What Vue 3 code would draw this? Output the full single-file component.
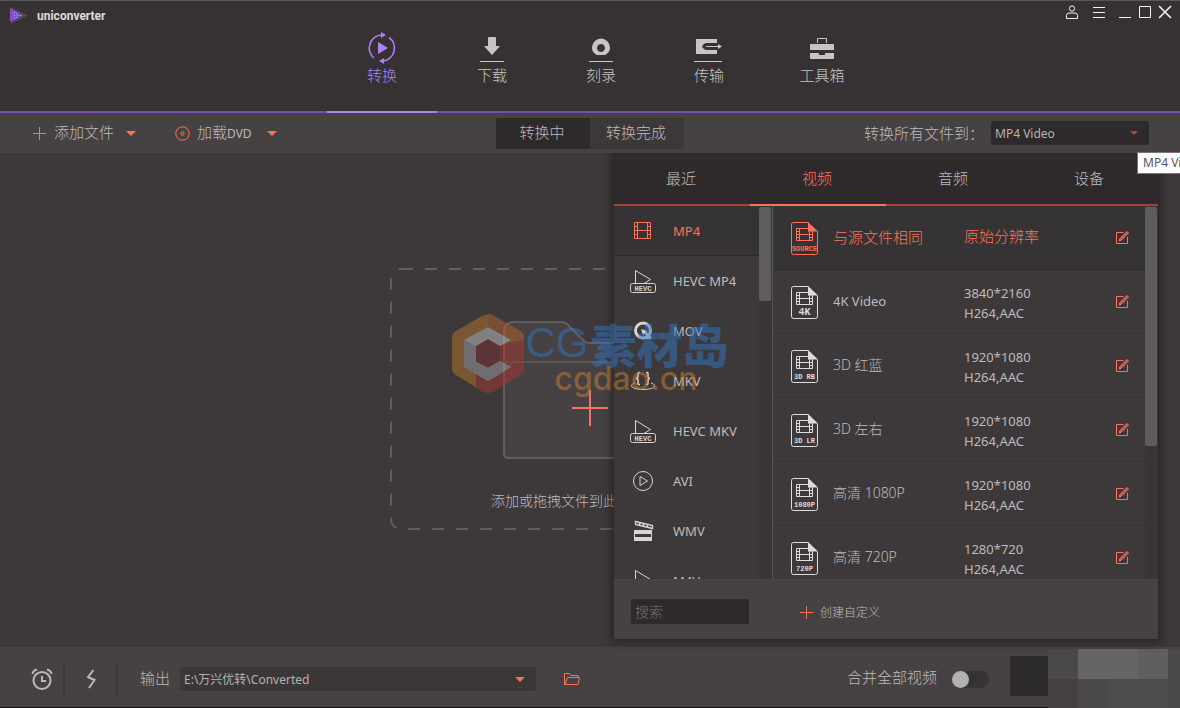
<script setup>
import { ref } from 'vue'

const navTabs = [
  { id: 'convert', label: '转换' },
  { id: 'download', label: '下载' },
  { id: 'burn', label: '刻录' },
  { id: 'transfer', label: '传输' },
  { id: 'toolbox', label: '工具箱' },
]
const activeNav = ref('convert')

const stages = ['转换中', '转换完成']
const activeStage = ref('转换中')

const categories = ['最近', '视频', '音频', '设备']
const activeCategory = ref('视频')

const formats = [
  { name: 'MP4', icon: 'film' },
  { name: 'HEVC MP4', icon: 'hevc' },
  { name: 'MOV', icon: 'quick' },
  { name: 'MKV', icon: 'mkv' },
  { name: 'HEVC MKV', icon: 'hevc' },
  { name: 'AVI', icon: 'disc' },
  { name: 'WMV', icon: 'clapper' },
  { name: 'M4V', icon: 'hevc' },
]
const activeFormat = ref('MP4')

const presets = [
  { name: '与源文件相同', tag: 'SOURCE', lines: ['原始分辨率'] },
  { name: '4K Video', tag: '4K', lines: ['3840*2160', 'H264,AAC'] },
  { name: '3D 红蓝', tag: '3D RB', lines: ['1920*1080', 'H264,AAC'] },
  { name: '3D 左右', tag: '3D LR', lines: ['1920*1080', 'H264,AAC'] },
  { name: '高清 1080P', tag: '1080P', lines: ['1920*1080', 'H264,AAC'] },
  { name: '高清 720P', tag: '720P', lines: ['1280*720', 'H264,AAC'] },
]
const activePreset = ref('与源文件相同')

const target = ref('MP4 Video')
const output = ref('E:\\万兴优转\\Converted')
const search = ref('')
const merge = ref(false)
</script>

<template>
  <div class="app">
    <header class="header">
      <div class="brand">
        <svg width="20" height="20" viewBox="0 0 20 20" aria-hidden="true">
          <path d="M2 1 L19 9.500 L2 18z" fill="#4d494c" />
          <path d="M1 2 L14 9.500 L1 16z" fill="#8350c8" />
          <path d="M5 6h1v1h-1zM7 7h1v1h-1zM5 9h1v1h-1zM8 9h1v1h-1zM11 9h1v1h-1zM7 11h1v1h-1zM5 12h1v1h-1z" fill="#c3a1ff" />
        </svg>
        <span>uniconverter</span>
      </div>

      <nav class="nav">
        <button
          v-for="tab in navTabs"
          :key="tab.id"
          type="button"
          class="nav-tab"
          :class="[tab.id, { active: tab.id === activeNav }]"
          @click="activeNav = tab.id"
        >
          <svg v-if="tab.id === 'convert'" width="32" height="34" viewBox="0 0 32 34" fill="none" stroke="currentColor" stroke-width="1.600" aria-hidden="true">
            <path d="M8 27 A13 13 0 0 1 16 4" />
            <path d="M23 6.500 A13 13 0 0 1 17 30" />
            <path d="M15 1 L20 4 L15 7z M18 27 L13 30 L18 33z" fill="currentColor" stroke="none" />
            <path d="M12 11 L22 17 L12 23z" fill="currentColor" stroke="none" />
          </svg>
          <svg v-else-if="tab.id === 'download'" width="32" height="34" viewBox="0 0 32 34" fill="currentColor" aria-hidden="true">
            <path d="M12 7 q0-1 1-1 h6 q1 0 1 1 v8 h4 L16 24 L8 15 h4z" />
            <path d="M4 30h24v1h-24z" />
          </svg>
          <svg v-else-if="tab.id === 'burn'" width="32" height="34" viewBox="0 0 32 34" fill="currentColor" aria-hidden="true">
            <path fill-rule="evenodd" d="M12 24 C8 22 7 19 7 16.500 A9 9 0 0 1 25 16.500 C25 19 24 22 20 24z M16 13 a4 4 0 1 0 .01 0z" />
            <path d="M4 30h24v1h-24z" />
          </svg>
          <svg v-else-if="tab.id === 'transfer'" width="32" height="34" viewBox="0 0 32 34" fill="currentColor" aria-hidden="true">
            <path d="M3 8 h21 v4 h-11 c-5 2 -5 5 0 7 h11 v4 h-21z" />
            <path d="M13 15h12v-2l4 2.500 l-4 2.500 v-2h-12z" />
            <path d="M1 30h28v1h-28z" />
          </svg>
          <svg v-else width="32" height="34" viewBox="0 0 32 34" fill="currentColor" aria-hidden="true">
            <path d="M11.500 12 v-4.500 h9 v4.500" fill="none" stroke="currentColor" />
            <path d="M5 13h22q1 0 1 1v5h-24v-5q0-1 1-1zM4 22h9v2h6v-2h9v5q0 1-1 1h-22q-1 0-1-1z" />
          </svg>
          <span>{{ tab.label }}</span>
        </button>
      </nav>

      <div class="window-controls">
        <button type="button" class="account" aria-label="账户">
          <svg width="14" height="14" viewBox="0 0 14 14" fill="none" stroke="currentColor" aria-hidden="true">
            <circle cx="7" cy="3.500" r="2.600" />
            <path d="M1.500 13.500 v-3 q0-2.500 2.500-2.500 h6 q2.500 0 2.500 2.500 v3z" />
          </svg>
        </button>
        <button type="button" class="menu" aria-label="菜单">
          <svg width="14" height="14" viewBox="0 0 14 14" fill="none" stroke="currentColor" aria-hidden="true">
            <path d="M1 2.500h12M1 7.500h12M1 12.500h12" />
          </svg>
        </button>
        <button type="button" aria-label="最小化">
          <svg width="14" height="14" viewBox="0 0 14 14" fill="none" stroke="currentColor" aria-hidden="true">
            <path d="M1 12.500h12" />
          </svg>
        </button>
        <button type="button" aria-label="最大化">
          <svg width="14" height="14" viewBox="0 0 14 14" fill="none" stroke="currentColor" aria-hidden="true">
            <path d="M1.500 1.500h11v11h-11z" />
          </svg>
        </button>
        <button type="button" aria-label="关闭">
          <svg width="14" height="14" viewBox="0 0 14 14" fill="none" stroke="currentColor" stroke-width="1.500" aria-hidden="true">
            <path d="M1 1 L13 13 M13 1 L1 13" />
          </svg>
        </button>
      </div>
    </header>

    <div class="toolbar">
      <div class="tools">
        <button type="button" class="tool">
          <svg width="14" height="14" viewBox="0 0 14 14" stroke="#ff7259" aria-hidden="true"><path d="M0 7.500h13M6.500 1v13" /></svg>
          <span>添加文件</span>
          <svg class="caret" width="10" height="5" viewBox="0 0 10 5" fill="#ff7259" aria-hidden="true"><path d="M0 0h10L5 5z" /></svg>
        </button>
        <button type="button" class="tool">
          <svg width="15" height="15" viewBox="0 0 15 15" fill="none" stroke="#ff7259" aria-hidden="true">
            <circle cx="7.500" cy="7.500" r="6.700" />
            <rect x="6" y="6" width="3" height="3" rx="1" />
          </svg>
          <span>加载<small>DVD</small></span>
          <svg class="caret" width="10" height="5" viewBox="0 0 10 5" fill="#ff7259" aria-hidden="true"><path d="M0 0h10L5 5z" /></svg>
        </button>
      </div>

      <div class="stages">
        <button
          v-for="stage in stages"
          :key="stage"
          type="button"
          :class="{ active: stage === activeStage }"
          @click="activeStage = stage"
        >{{ stage }}</button>
      </div>

      <div class="target">
        <label for="target">转换所有文件到：</label>
        <div class="select-box target-box">
          <select id="target" v-model="target">
            <option>MP4 Video</option>
          </select>
          <svg width="8" height="4" viewBox="0 0 8 4" fill="#b5453a" aria-hidden="true"><path d="M0 0h8L4 4z" /></svg>
        </div>
      </div>
      <div class="tooltip" role="tooltip">MP4 Video</div>
    </div>

    <main class="main">
      <section class="dropzone">
        <svg class="dropzone-frame" width="100%" height="100%" aria-hidden="true">
          <rect x="1" y="1" width="398" height="260" rx="10" fill="none" stroke="#625e5f" stroke-width="2" stroke-dasharray="12 12" />
        </svg>
        <button type="button" class="add" aria-label="添加文件">
          <svg width="174" height="138" viewBox="0 0 174 138" fill="none" aria-hidden="true">
            <path d="M1 11 q0-10 10-10 h48 q3 0 6 3 l16 16 q3 2 6 2 h77 q9 0 9 9 v101 q0 5-5 5 h-162 q-5 0-5-5z" fill="#464243" stroke="#625e5f" stroke-width="2" />
            <path d="M2 41h170" stroke="#5a5657" stroke-width="2" />
            <path d="M69 87h36M87 69v36" stroke="#ff7259" stroke-width="2" />
          </svg>
        </button>
        <p>添加或拖拽文件到此处开始转换</p>
      </section>

      <section class="popup">
        <nav class="categories">
          <button
            v-for="category in categories"
            :key="category"
            type="button"
            :class="{ active: category === activeCategory }"
            @click="activeCategory = category"
          >{{ category }}</button>
        </nav>

        <div class="lists">
          <div class="format-pane">
            <ul class="formats">
              <li v-for="format in formats" :key="format.name">
                <button
                  type="button"
                  :class="{ active: format.name === activeFormat }"
                  @click="activeFormat = format.name"
                >
                  <svg width="28" height="28" viewBox="0 0 28 28" fill="none" stroke="currentColor" aria-hidden="true">
                    <template v-if="format.icon === 'film'">
                      <path d="M5.500 5.500h16v16h-16zM8.500 5.500v16M18.500 5.500v16M8.500 13.500h10M5.500 9.500h3M5.500 13.500h3M5.500 17.500h3M18.500 9.500h3M18.500 13.500h3M18.500 17.500h3" />
                    </template>
                    <template v-else-if="format.icon === 'hevc'">
                      <path d="M6.500 16.500 V3.500 L21.500 12.500 L15 16.500" />
                      <rect x="1.500" y="16.500" width="25" height="9" rx="2" />
                      <text x="14" y="24" text-anchor="middle" class="tiny">HEVC</text>
                    </template>
                    <template v-else-if="format.icon === 'quick'">
                      <circle cx="14" cy="13.500" r="7.500" stroke-width="3" />
                      <path d="M14.500 14 L21.500 21" stroke-width="3" />
                      <path d="M12 12 L18 14 L14 18z M16 20h6v2h-6z" fill="currentColor" stroke="none" />
                    </template>
                    <template v-else-if="format.icon === 'mkv'">
                      <path d="M11 5.500h-1q-1 0-1 1v3q0 2-2 2q2 0 2 2v3q0 1 1 1h1M17 5.500h1q1 0 1 1v3q0 2 2 2q-2 0-2 2v3q0 1-1 1h-1" stroke-width="1.500" />
                      <path d="M6 16 C-1 18 3 22.500 14 22.500 S29 18 22 16" />
                    </template>
                    <template v-else-if="format.icon === 'disc'">
                      <circle cx="14" cy="14" r="9.500" />
                      <path d="M11 9.500v9l7.500-4.500z" />
                    </template>
                    <template v-else>
                      <path fill="currentColor" stroke="none" fill-rule="evenodd" d="M5 13h18v11h-18z M6 17v3h16v-3z" />
                      <path d="M6.500 4.500 L23.500 8.500 V11.500 L6.500 7.500z M10 5.500l1 3M14 6.500l1 3M18 7.500l1 3" stroke-width="1.400" />
                    </template>
                  </svg>
                  <span>{{ format.name }}</span>
                </button>
              </li>
            </ul>
            <div class="track"><div class="thumb short"></div></div>
          </div>

          <div class="preset-pane">
            <ul class="presets">
              <li
                v-for="preset in presets"
                :key="preset.name"
                :class="{ active: preset.name === activePreset }"
              >
                <button type="button" class="preset" @click="activePreset = preset.name">
                  <svg width="28" height="34" viewBox="0 0 28 34" fill="none" stroke="currentColor" aria-hidden="true">
                    <path d="M17.500 .500 h-15 q-2 0-2 2 v28 q0 2 2 2 h22 q2 0 2-2 V9.500" />
                    <path d="M17 0 L27 9.500 H17z" fill="currentColor" stroke="none" />
                    <path d="M5.500 6.500h16v12h-16zM8.500 6.500v12M18.500 6.500v12M8.500 12.500h10M5.500 9.500h3M5.500 12.500h3M5.500 15.500h3M18.500 12.500h3M18.500 15.500h3" />
                    <text x="13.500" y="29" text-anchor="middle" class="tiny" :class="{ large: preset.tag === '4K' }">{{ preset.tag }}</text>
                  </svg>
                  <span class="preset-name">{{ preset.name }}</span>
                  <span class="preset-detail">
                    <span v-for="line in preset.lines" :key="line">{{ line }}</span>
                  </span>
                </button>
                <button type="button" class="edit" :aria-label="'编辑 ' + preset.name">
                  <svg width="14" height="14" viewBox="0 0 14 14" fill="none" stroke="#ff7259" aria-hidden="true">
                    <path d="M7.500 1.500H.500v11h11V6" />
                    <path d="M3 10 L4 7.500 L11 .500 L12.500 2 L5.500 9z" fill="#a5604e" />
                  </svg>
                </button>
              </li>
            </ul>
            <div class="track"><div class="thumb long"></div></div>
          </div>
        </div>

        <div class="popup-foot">
          <input v-model="search" type="text" placeholder="搜索" aria-label="搜索" />
          <button type="button" class="create">
            <svg width="14" height="14" viewBox="0 0 14 14" stroke="#ff7259" aria-hidden="true"><path d="M0 7.500h13M6.500 1v13" /></svg>
            <span>创建自定义</span>
          </button>
        </div>
      </section>

      <div class="watermark" aria-hidden="true">
        <svg width="76" height="84" viewBox="0 0 76 84">
          <path d="M32 4 Q38 1 44 4 L70 19 Q74 21 74 26 V56 Q74 61 70 63 L44 79 Q38 82 32 79 L6 63 Q2 61 2 56 V26 Q2 21 6 19z" fill="#b5762c" />
          <path d="M38 2 Q41 2 44 4 L70 19 Q74 21 74 26 V30 L38 42z" fill="#b9622f" />
          <path d="M74 28 V56 Q74 61 70 63 L44 79 Q38 82 32 79 L26 75 V46 L50 32z" fill="#a83632" />
          <path d="M38 27 L50 34 V50 L38 56 L26 50 V34z" fill="#7e3131" />
          <path d="M38 15 L61 28 L50 34 L38 27 L26 34 V50 L38 56 L50 49 L61 55 L38 69 L14 55 V28z" fill="#c9c7ca" />
          <path d="M14 28 L26 34 V50 L38 56 L50 49 L61 55 L38 69 L14 55z" fill="#a3a2a6" />
        </svg>
        <div class="watermark-text">
          <div class="watermark-name"><b>CG</b><strong>素材岛</strong></div>
          <div class="watermark-url">cgdao.cn</div>
        </div>
      </div>
    </main>

    <footer class="footer">
      <button type="button" class="foot-tool alarm" aria-label="定时">
        <svg width="22" height="22" viewBox="0 0 22 22" fill="none" stroke="currentColor" stroke-width="2" aria-hidden="true">
          <circle cx="11" cy="12.500" r="8.500" />
          <path d="M11 8v5h4" />
          <path d="M1.500 6 Q2 2.500 6 1.500 M20.500 6 Q20 2.500 16 1.500" />
        </svg>
      </button>
      <button type="button" class="foot-tool bolt" aria-label="加速">
        <svg width="12" height="20" viewBox="0 0 12 20" fill="none" stroke="currentColor" stroke-width="2" aria-hidden="true">
          <path d="M8.500 1 L3 8 L9.500 11 L4 19" />
        </svg>
      </button>
      <label class="output-label" for="output">输出</label>
      <div class="select-box output-box">
        <select id="output" v-model="output">
          <option>E:\万兴优转\Converted</option>
        </select>
        <svg width="10" height="5" viewBox="0 0 10 5" fill="#ff7259" aria-hidden="true"><path d="M0 0h10L5 5z" /></svg>
      </div>
      <button type="button" class="folder" aria-label="打开文件夹">
        <svg width="18" height="14" viewBox="0 0 18 14" fill="none" stroke="#ff7259" aria-hidden="true">
          <path d="M2 12.500h-.500V1.500h5l1.500 2h7v2" />
          <path d="M2 12.500 L4.500 5.500 H16.500 L15 12.500z" />
        </svg>
      </button>

      <label class="merge" for="merge">合并全部视频</label>
      <input id="merge" v-model="merge" class="switch" type="checkbox" role="switch" />
      <button type="button" class="start" aria-label="全部转换"></button>
      <div class="mosaic" aria-hidden="true">
        <i class="m1"></i><i class="m2"></i><i class="m2"></i><i class="m3"></i><i class="m1"></i>
        <i class="m4"></i><i class="m1"></i><i class="m5"></i><i class="m5"></i><i class="m1"></i>
      </div>
    </footer>
  </div>
</template>

<style>
html, body { background: #3d393a; }
</style>

<style scoped>
.app, .app * { box-sizing: border-box; }
.app {
  position: relative;
  display: flex;
  flex-direction: column;
  min-height: 100vh;
  overflow: hidden;
  background: #3d393a;
  color: #bdbbbb;
  font-family: "Noto Sans", "Noto Sans CJK SC", sans-serif;
  font-size: 15px;
  font-weight: 300;
}
button {
  margin: 0;
  padding: 0;
  border: 0;
  background: none;
  color: inherit;
  font: inherit;
  cursor: pointer;
}
svg { display: block; flex: none; }
ul { margin: 0; padding: 0; list-style: none; }

.header {
  position: relative;
  height: 113px;
  flex: none;
  background: #363233;
  border-top: 1px solid #575455;
  border-bottom: 2px solid #7c4ab8;
}
.brand {
  position: absolute;
  top: 5px;
  left: 9px;
  display: flex;
  align-items: center;
  gap: 8px;
  color: #dedcdc;
  font: bold 12px/20px Roboto, sans-serif;
}
.nav {
  display: flex;
  justify-content: center;
  height: 112px;
  padding-left: 28px;
}
.nav-tab {
  display: flex;
  flex-direction: column;
  align-items: center;
  width: 110px;
  padding-top: 30px;
  color: #c6c4c4;
  line-height: 20px;
  border-bottom: 2px solid transparent;
}
.nav-tab.burn, .nav-tab.transfer { width: 108px; }
.nav-tab.toolbox { width: 118px; }
.nav-tab.active { color: #b07ffb; border-bottom-color: #b184f5; }
.window-controls {
  position: absolute;
  top: 4px;
  right: 8px;
  display: flex;
  gap: 6px;
  color: #f4f4f4;
}
.account { margin-right: 7px; }
.menu { margin-right: 6px; }

.toolbar {
  position: relative;
  z-index: 3;
  display: grid;
  grid-template-columns: 1fr auto 1fr;
  align-items: center;
  height: 40px;
  padding: 0 31px;
  background: #464243;
}
.tools { display: flex; gap: 39px; padding-left: 2px; }
.tool { display: flex; align-items: center; gap: 7px; }
.tool span { padding-bottom: 3px; }
.caret { margin-left: 5px; }
.tool + .tool .caret { margin-left: 8px; }
small { font-size: 12px; font-weight: 400; }
.stages { display: flex; background: #3c3839; border-radius: 3px; overflow: hidden; }
.stages button { width: 94px; height: 31px; padding: 0 2px 3px 0; }
.stages .active { background: #2e2a2b; }
.target { display: flex; justify-content: flex-end; align-items: center; }
.target label { margin-right: 7px; padding-bottom: 2px; white-space: nowrap; }
.select-box { position: relative; height: 24px; }
.select-box select {
  appearance: none;
  width: 100%;
  height: 24px;
  margin: 0;
  padding: 1px 24px 0 4px;
  border: 0;
  border-radius: 3px;
  background: #2e2a2b;
  color: #b5b3b3;
  font: 400 12px/20px "Noto Sans", "Noto Sans CJK SC", sans-serif;
}
.select-box svg {
  position: absolute;
  top: 10px;
  right: 11px;
  pointer-events: none;
}
.target-box { width: 158px; }
.tooltip {
  position: absolute;
  top: 39px;
  left: calc(100% - 43px);
  padding: 0 5px;
  border: 1px solid #767676;
  background: #fff;
  color: #575757;
  font-size: 12px;
  font-weight: 400;
  line-height: 20px;
  white-space: nowrap;
}

.main {
  position: relative;
  z-index: 2;
  display: flex;
  flex: 1;
  align-items: center;
  justify-content: center;
  min-height: 494px;
  padding-bottom: 2px;
  background: #3d393a;
}
.dropzone {
  position: relative;
  display: flex;
  flex-direction: column;
  align-items: center;
  width: 400px;
  height: 262px;
  padding-top: 53px;
}
.dropzone-frame { position: absolute; inset: 0; }
.add { position: relative; }
.dropzone p {
  margin: 32px 2px 0 0;
  font-size: 14px;
  line-height: 20px;
  white-space: nowrap;
}

.popup {
  position: absolute;
  top: 0;
  right: 22px;
  bottom: 8px;
  display: flex;
  flex-direction: column;
  width: 544px;
  background: #3d393a;
  box-shadow: 0 0 8px 3px rgba(20, 18, 18, 0.55);
}
.categories {
  display: flex;
  flex: none;
  height: 53px;
  background: #2e2a2b;
}
.categories button {
  flex: 1;
  padding: 0 2px 3px 0;
  border-bottom: 2px solid #a83f32;
}
.categories .active { color: #ff7259; border-bottom-color: #ff7259; }
.lists { display: flex; flex: 1; min-height: 0; overflow: hidden; }
.format-pane { display: flex; width: 159px; border-right: 1px solid #575455; }
.formats, .presets { flex: 1; height: 0; }
.formats button {
  display: flex;
  align-items: center;
  gap: 16px;
  width: 100%;
  height: 50px;
  padding-left: 15px;
  font-size: 13px;
  font-weight: 400;
  text-align: left;
}
.formats svg { color: #d6d4d4; }
.formats .active { background: #363334; border-bottom: 1px solid #2e2a2b; color: #ff7259; }
.formats .active svg { color: #ff7259; }
.track { width: 13px; flex: none; padding-top: 1px; background: #393536; }
.thumb { width: 12px; border-radius: 2px; background: #5f5c5d; }
.short { height: 94px; }
.long { height: 239px; }
.tiny {
  fill: currentColor;
  stroke: none;
  font: bold 7px "Liberation Mono", monospace;
}
.tiny.large { font-size: 10px; }
.preset-pane { display: flex; flex: 1; padding-left: 1px; }
.presets li {
  display: flex;
  align-items: center;
  height: 64px;
  padding: 0 15px 0 17px;
  border-bottom: 1px solid #363233;
}
.presets .active { background: #363334; border-bottom-color: #2a2727; color: #ff7259; }
.preset {
  display: flex;
  align-items: center;
  flex: 1;
  height: 100%;
  padding-top: 3px;
  text-align: left;
}
.preset svg { color: #dedcdc; }
.presets .active .preset svg { color: #ff7259; }
.preset-name { width: 131px; margin-left: 14px; padding-bottom: 4px; font-size: 13px; font-weight: 400; }
.presets li:nth-child(n + 3) .preset-name { padding-bottom: 6px; font-size: 14px; font-weight: 300; }
.presets .active .preset-name { padding-bottom: 6px; font-size: 15px; font-weight: 300; }
.preset-detail { display: flex; flex-direction: column; font-size: 13px; font-weight: 400; line-height: 20px; }
.presets .active .preset-detail { padding-bottom: 6px; font-size: 15px; font-weight: 300; }
.popup-foot {
  display: flex;
  align-items: center;
  flex: none;
  height: 60px;
  padding: 5px 17px 0;
  background: #464243;
}
.popup-foot input {
  width: 118px;
  height: 25px;
  padding: 0 4px;
  border: 0;
  border-radius: 2px;
  background: #2e2a2b;
  color: #b5b3b3;
  font: 300 14px "Noto Sans", "Noto Sans CJK SC", sans-serif;
}
.popup-foot input::placeholder { color: #777475; opacity: 1; }
.create {
  display: flex;
  align-items: center;
  gap: 6px;
  margin-left: 51px;
  font-size: 12px;
}

.watermark {
  position: absolute;
  top: 159px;
  right: 0;
  left: 0;
  display: flex;
  justify-content: center;
  padding-right: 2px;
  opacity: 0.5;
  pointer-events: none;
}
.watermark-text { color: #3275c4; }
.watermark-name { display: flex; align-items: center; gap: 2px; height: 62px; line-height: 62px; }
.watermark-name b { font: 400 42px/62px "Liberation Sans", sans-serif; }
.watermark-name strong { font: 900 46px/58px "Noto Sans CJK SC", sans-serif; }
.watermark-url {
  margin: -12px 0 0 29px;
  color: #cd7e2d;
  font: 500 32px/34px Inter, sans-serif;
}

.footer {
  position: relative;
  z-index: 1;
  display: flex;
  align-items: center;
  flex: none;
  height: 61px;
  padding: 4px 0 0;
  background: #464243;
  border-bottom: 1px solid #141313;
}
.foot-tool {
  display: flex;
  align-items: center;
  justify-content: center;
  height: 32px;
  border-right: 2px solid #3b3738;
  color: #b9bab7;
}
.alarm { width: 65px; padding-left: 20px; }
.bolt { width: 53px; }
.output-label { margin: 0 10px 0 22px; padding-bottom: 4px; }
.output-box { width: 356px; }
.output-box select { background: #3b3738; }
.folder { margin-left: 27px; }
.merge { margin-left: auto; padding-bottom: 5px; }
.switch {
  appearance: none;
  display: flex;
  width: 37px;
  height: 17px;
  margin: 0 21px 0 15px;
  border-radius: 9px;
  background: #363334;
  cursor: pointer;
}
.switch::before {
  width: 17px;
  height: 17px;
  border-radius: 50%;
  background: #b2b0b0;
  content: "";
}
.switch:checked { justify-content: flex-end; }
.start {
  align-self: flex-start;
  width: 138px;
  height: 40px;
  margin: 5px 32px 0 0;
  border-radius: 2px;
  background: #2e2b2c;
}
.mosaic {
  position: absolute;
  top: 2px;
  right: 0;
  bottom: -1px;
  display: grid;
  grid-template-columns: repeat(4, 30px) 12px;
  grid-template-rows: 30px 1fr;
}
.m1 { background: #4b4849; }
.m2 { background: #666465; }
.m3 { background: #605e5e; }
.m4 { background: #454142; }
.m5 { background: #4d4c4a; }
</style>
